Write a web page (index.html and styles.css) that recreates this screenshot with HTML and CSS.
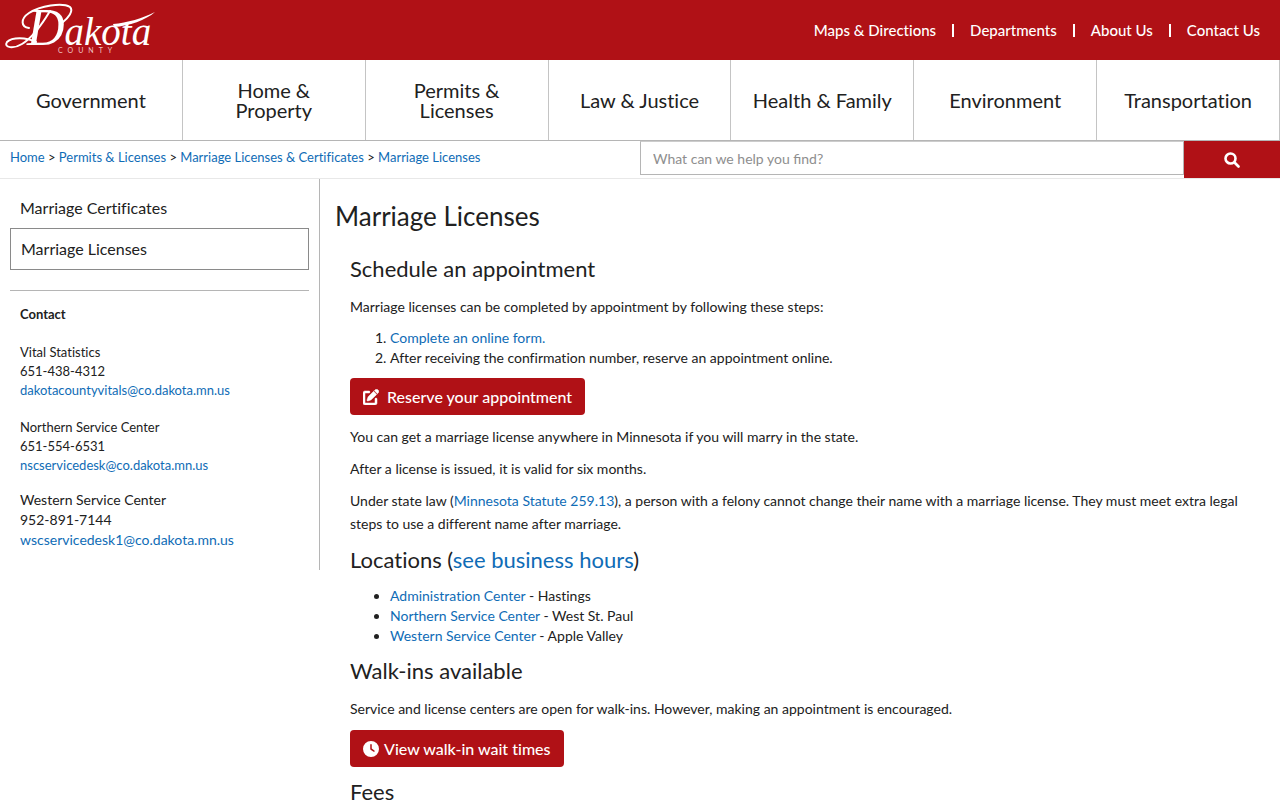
FILE: index.html
```html
<!DOCTYPE html>
<html lang="en">
<head>
    <meta charset="UTF-8">
    <meta name="viewport" content="width=device-width, initial-scale=1.0">
    <title>Marriage Licenses | Dakota County</title>
    <link rel="stylesheet" href="styles.css">
</head>
<body>
    <!-- top bar -->
    <header class="header">
        <a class="logo" href="#" aria-label="Dakota County home">
            <svg width="160" height="60" viewBox="0 0 160 60">
                <!-- flourishes around the name -->
                <g class="swash">
                    <path d="M29 28C21 27 20 19 29 13C40 6 62 2 70 7C74 11 68 18 63 22"/>
                    <path d="M36 42C26 37 12 37 7 42C3 48 14 49 22 44C32 38 41 26 50 11"/>
                </g>
                <path class="bar" d="M113 24C127 23 143 18 155 12C146 20 129 26 114 27Z"/>
                <text class="logo-name" x="27" y="45"><tspan class="logo-first">D</tspan>akota</text>
                <text class="logo-sub" x="58" y="53">COUNTY</text>
            </svg>
        </a>
        <nav class="top-links">
            <a href="#">Maps &amp; Directions</a>
            <a href="#">Departments</a>
            <a href="#">About Us</a>
            <a href="#">Contact Us</a>
        </nav>
    </header>

    <!-- main menu -->
    <nav class="menu">
        <a href="#">Government</a>
        <a href="#">Home &amp;<br>Property</a>
        <a href="#">Permits &amp;<br>Licenses</a>
        <a href="#">Law &amp; Justice</a>
        <a href="#">Health &amp; Family</a>
        <a href="#">Environment</a>
        <a href="#">Transportation</a>
    </nav>

    <!-- breadcrumb and search -->
    <div class="subbar">
        <div class="breadcrumb">
            <a href="#">Home</a> &gt;
            <a href="#">Permits &amp; Licenses</a> &gt;
            <a href="#">Marriage Licenses &amp; Certificates</a> &gt;
            <a href="#">Marriage Licenses</a>
        </div>
        <form class="search">
            <input type="text" aria-label="Search" placeholder="What can we help you find?">
            <button type="submit" aria-label="Search">
                <svg width="16" height="16" viewBox="0 0 16 16" fill="none" stroke="currentColor" stroke-width="2.600" stroke-linecap="round"><circle cx="6.500" cy="6.500" r="5"/><path d="M10.500 10.500L14.500 14.500"/></svg>
            </button>
        </form>
    </div>

    <div class="page">
        <aside class="sidebar">
            <nav class="side-menu">
                <a href="#">Marriage Certificates</a>
                <a class="active" href="#">Marriage Licenses</a>
            </nav>
            <div class="contact">
                <h2>Contact</h2>
                <p>Vital Statistics<br>651-438-4312<br><a href="#">dakotacountyvitals@co.dakota.mn.us</a></p>
                <p>Northern Service Center<br>651-554-6531<br><a href="#">nscservicedesk@co.dakota.mn.us</a></p>
                <p class="large">Western Service Center<br>952-891-7144<br><a href="#">wscservicedesk1@co.dakota.mn.us</a></p>
            </div>
        </aside>

        <main class="main">
            <h1>Marriage Licenses</h1>
            <div class="content">
                <h2>Schedule an appointment</h2>
                <p>Marriage licenses can be completed by appointment by following these steps:</p>
                <ol>
                    <li><a href="#">Complete an online form.</a></li>
                    <li>After receiving the confirmation number, reserve an appointment online.</li>
                </ol>
                <a class="btn btn-wide" href="#">
                    <svg width="16" height="16" viewBox="0 0 512 512" fill="currentColor" stroke="currentColor" stroke-width="16"><path d="M471.600 21.700c-21.900-21.900-57.300-21.900-79.200 0L362.300 51.700l97.900 97.900 30.100-30.100c21.900-21.900 21.900-57.300 0-79.200L471.600 21.700zm-299.200 220c-6.100 6.100-10.800 13.600-13.500 21.900l-29.600 88.800c-2.900 8.600-.6 18.100 5.800 24.600s15.900 8.700 24.600 5.800l88.800-29.600c8.200-2.700 15.700-7.400 21.900-13.500L437.700 172.300 339.700 74.300 172.400 241.700zM64 64C28 64 0 92 0 128V448c0 36 28 64 64 64H384c36 0 64-28 64-64V320c0-17.700-14.300-32-32-32s-32 14.300-32 32v128H64V128H192c17.700 0 32-14.300 32-32s-14.300-32-32-32H64z"/></svg>
                    Reserve your appointment
                </a>
                <p>You can get a marriage license anywhere in Minnesota if you will marry in the state.</p>
                <p>After a license is issued, it is valid for six months.</p>
                <p>Under state law (<a href="#">Minnesota Statute 259.13</a>), a person with a felony cannot change their name with a marriage license. They must meet extra legal steps to use a different name after marriage.</p>

                <h2>Locations (<a href="#">see business hours</a>)</h2>
                <ul>
                    <li><a href="#">Administration Center</a> - Hastings</li>
                    <li><a href="#">Northern Service Center</a> - West St. Paul</li>
                    <li><a href="#">Western Service Center</a> - Apple Valley</li>
                </ul>

                <h2>Walk-ins available</h2>
                <p>Service and license centers are open for walk-ins. However, making an appointment is encouraged.</p>
                <a class="btn" href="#">
                    <svg width="16" height="16" viewBox="0 0 512 512" fill="currentColor"><path d="M256 0a256 256 0 1 1 0 512A256 256 0 1 1 256 0zM232 120V256c0 8 4 15.500 10.700 20l96 64c11 7.400 25.900 4.400 33.300-6.700s4.400-25.900-6.700-33.300L280 243.200V120c0-13.300-10.700-24-24-24s-24 10.700-24 24z"/></svg>
                    View walk-in wait times
                </a>

                <h2>Fees</h2>
            </div>
        </main>
    </div>
</body>
</html>
```
FILE: styles.css
```css
*{
    box-sizing: border-box;
}
body{
    margin: 0;
    font-family: Lato, "Liberation Sans", sans-serif;
    font-size: 14px;
    line-height: 23px;
    font-variant-ligatures: none;
    color: #212121;
    background: #fff;
}
a{
    color: #0f6cb6;
    text-decoration: none;
}
h1, h2, p, ol, ul{
    margin: 0;
}
/* top bar */
.header{
    display: flex;
    justify-content: space-between;
    align-items: center;
    height: 60px;
    background: #b01116;
}
.logo svg{
    display: block;
}
.logo text{
    fill: #fff;
}
.logo-name{
    font-family: "Liberation Serif", serif;
    font-size: 39px;
    font-style: italic;
}
.logo-first{
    font-size: 52px;
}
.logo .logo-sub{
    font-size: 7px;
    letter-spacing: 5px;
    fill: #f0c4c5;
}
.swash{
    fill: none;
    stroke: #fff;
    stroke-width: 2;
    stroke-linecap: round;
}
.bar{
    fill: #fff;
}
.top-links{
    display: flex;
    padding-right: 20px;
}
.top-links a{
    display: flex;
    align-items: center;
    font-size: 15px;
    font-weight: 500;
    color: #fff;
}
.top-links a + a::before{
    content: "";
    width: 2px;
    height: 13px;
    margin: 0 16px;
    background: #fff;
}
/* main menu */
.menu{
    display: grid;
    grid-template-columns: repeat(7, 1fr);
    border-bottom: 1px solid #b5b5b5;
}
.menu a{
    display: flex;
    align-items: center;
    justify-content: center;
    min-height: 80px;
    border-right: 1px solid #c4c4c4;
    font-size: 20px;
    line-height: 20px;
    text-align: center;
    color: #212121;
}
/* breadcrumb and search */
.subbar{
    display: grid;
    grid-template-columns: 1fr 1fr;
    border-bottom: 1px solid #e8e8e8;
}
.breadcrumb{
    padding: 5px 10px;
    font-size: 13px;
    line-height: 22px;
}
.search{
    display: flex;
    align-items: flex-start;
}
.search input{
    flex: 1;
    min-width: 0;
    height: 34px;
    padding: 0 12px;
    border: 1px solid #b5b5b5;
    border-top-color: #ccc;
    font-family: inherit;
    font-size: 14px;
    color: #212121;
}
.search input::placeholder{
    color: #8e8e8e;
}
.search button{
    display: flex;
    align-items: center;
    justify-content: center;
    width: 15%;
    height: 37px;
    border: 0;
    background: #b01116;
    color: #fff;
}
/* page */
.page{
    display: flex;
    align-items: flex-start;
}
.sidebar{
    width: 25%;
    padding: 9px 10px 20px;
    border-right: 1px solid #b5b5b5;
}
.side-menu{
    padding-bottom: 20px;
    border-bottom: 1px solid #b5b5b5;
}
.side-menu a{
    display: block;
    padding: 8px 10px;
    font-size: 16px;
    line-height: 24px;
    color: #212121;
}
.side-menu .active{
    border: 1px solid #8a8a8a;
}
.contact{
    padding: 14px 10px 0;
    font-size: 13px;
    line-height: 19px;
}
.contact h2{
    margin-bottom: 19px;
    font-size: 13px;
    font-weight: 700;
}
.contact p + p{
    margin-top: 18px;
}
.contact p + .large{
    margin-top: 15px;
    font-size: 14px;
    line-height: 20px;
}
.main{
    flex: 1;
    padding: 21px 15px;
}
.main h1{
    font-size: 26px;
    font-weight: 400;
    line-height: 32px;
}
.content{
    padding: 12px 15px;
}
.content h2{
    margin: 13px 0 14px;
    font-size: 22px;
    font-weight: 400;
    line-height: 24px;
}
.content p{
    margin: 9px 0;
}
.content ol,
.content ul{
    margin: 10px 0;
    padding-left: 40px;
    line-height: 20px;
}
.btn{
    display: flex;
    align-items: center;
    gap: 5px;
    width: fit-content;
    margin: 10px 0;
    padding: 7px 13px;
    border-radius: 4px;
    background: #b01116;
    font-size: 16px;
    font-weight: 500;
    color: #fff;
}
.btn-wide{
    gap: 8px;
}
```
